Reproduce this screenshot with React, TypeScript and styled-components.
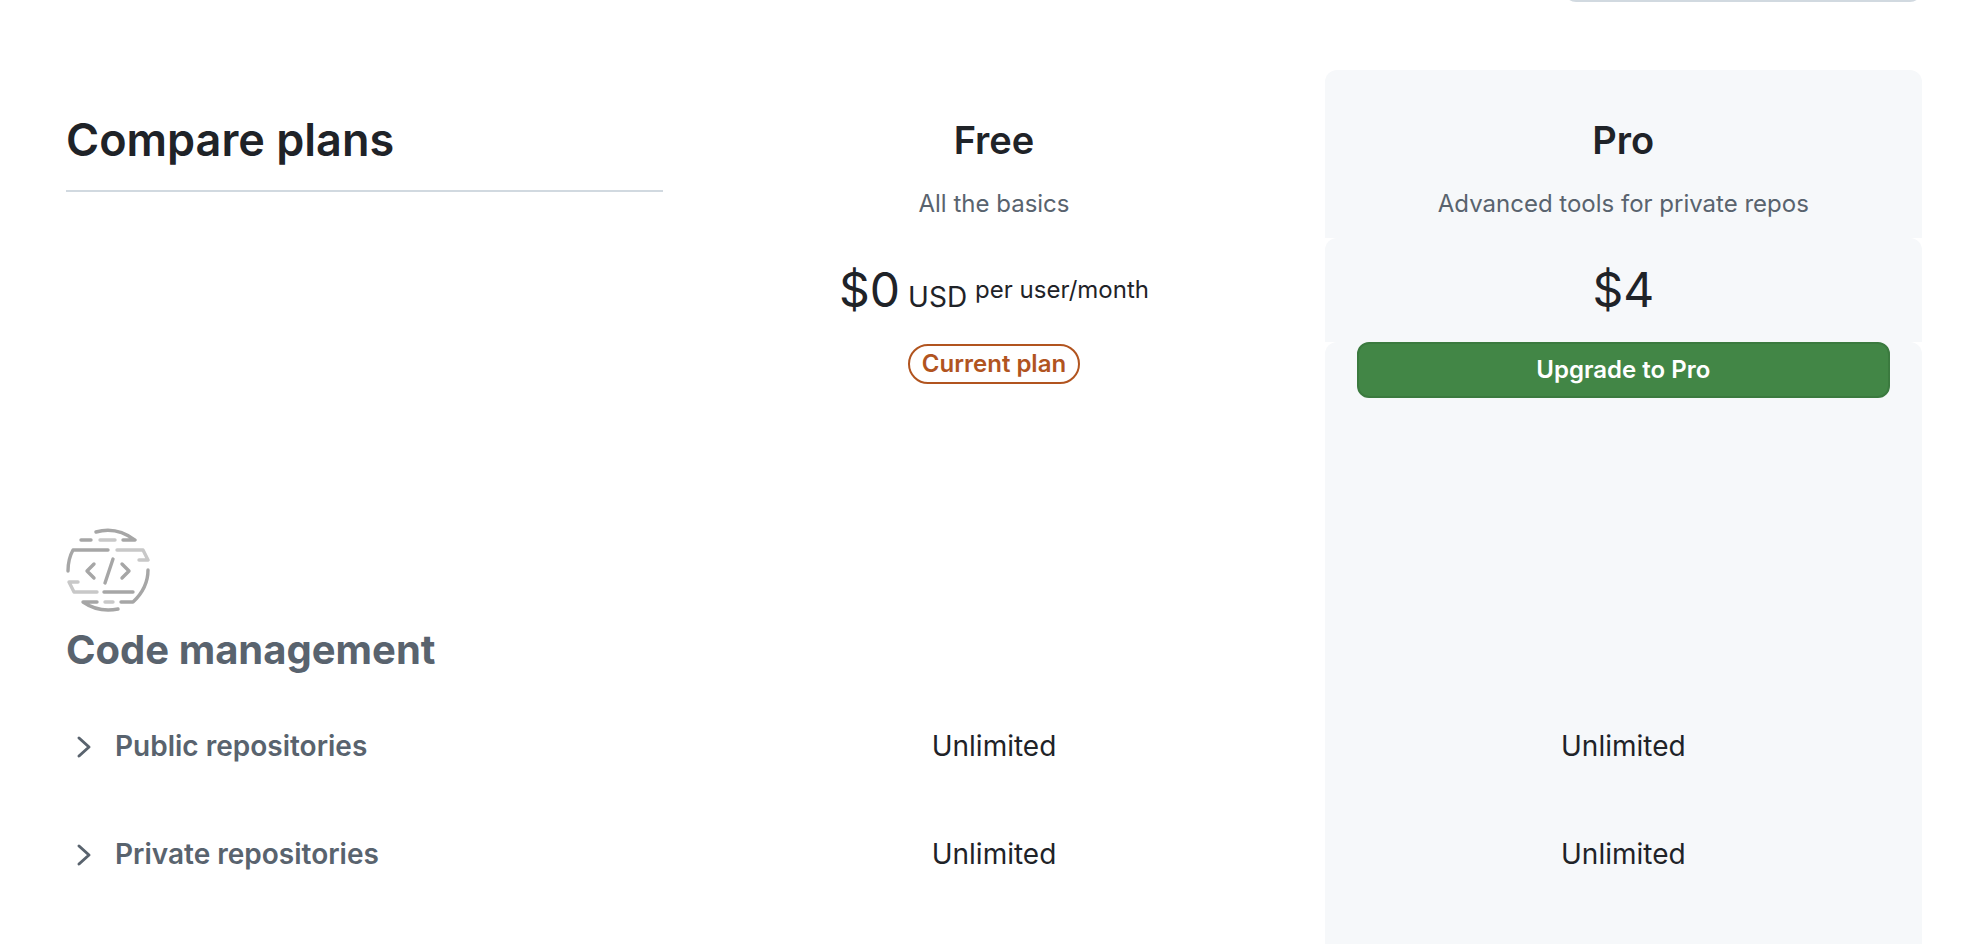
import React from "react";
import styled, { createGlobalStyle } from "styled-components";

const ink = "#1f2328";
const muted = "#59636e";
const line = "#d1d9e0";
const panel = "#f6f8fa";
const accent = "#b1541f";

const GlobalStyle = createGlobalStyle`
  *, *::before, *::after { box-sizing: border-box; }
  body {
    margin: 0;
    background: #fff;
    color: ${ink};
    font-family: Inter, "Liberation Sans", sans-serif;
    font-size: 28px;
    line-height: 44px;
  }
`;

const Page = styled.div`
  height: 100vh;
  overflow: hidden;
  padding: 0 64px 0 66px;
`;

const PlanCardEdge = styled.div`
  width: 358px;
  height: 2px;
  margin: 0 0 68px auto;
  overflow: hidden;
  display: flex;
  align-items: flex-end;

  &::after {
    content: "";
    flex: 1;
    height: 24px;
    border: 2px solid ${line};
    border-radius: 12px;
  }
`;

const Table = styled.table`
  display: block;
`;

const Body = styled.tbody`
  display: block;
`;

const Head = styled.thead`
  display: block;
`;

const Row = styled.tr<{ $height: number }>`
  display: grid;
  grid-template-columns: repeat(3, minmax(0, 1fr));
  column-gap: 32px;
  min-height: ${(p) => p.$height}px;
`;

const Cell = styled.td<{ $pro?: boolean; $rounded?: boolean; $pad?: string }>`
  padding: ${(p) => p.$pad ?? "0"};
  text-align: center;
  font-weight: 400;
  background: ${(p) => (p.$pro ? panel : "transparent")};
  border-radius: ${(p) => (p.$rounded ? "12px 12px 0 0" : "0")};
`;

const TitleCell = styled.td`
  padding: 40px 0 0;
  text-align: left;
`;

const Title = styled.h1`
  margin: 0;
  padding-bottom: 20px;
  border-bottom: 2px solid ${line};
  font-size: 45px;
  font-weight: 600;
  line-height: 60px;
`;

const PlanName = styled.h2`
  margin: 0 0 20px;
  font-size: 38px;
  font-weight: 600;
  line-height: 60px;
`;

const PlanNote = styled.p`
  margin: 0;
  color: ${muted};
  font-size: 24px;
  line-height: 28px;
`;

const Price = styled.div`
  display: flex;
  justify-content: center;
  align-items: baseline;
  gap: 8px;
  line-height: 64px;
`;

const Amount = styled.span`
  font-size: 48px;
`;

const Currency = styled.span`
  font-size: 28px;
`;

const Period = styled.span`
  align-self: center;
  padding-bottom: 8px;
  font-size: 24px;
  line-height: 28px;
`;

const CurrentPlan = styled.span`
  display: block;
  width: fit-content;
  margin: 0 auto;
  padding: 0 12px;
  border: 2px solid ${accent};
  border-radius: 20px;
  color: ${accent};
  font-size: 24px;
  font-weight: 600;
  line-height: 36px;
`;

const UpgradeButton = styled.button`
  display: block;
  width: 100%;
  padding: 0 24px;
  border: 2px solid #3b7a3f;
  border-radius: 12px;
  background: #428646;
  color: #fff;
  font: inherit;
  font-size: 24px;
  font-weight: 600;
  line-height: 52px;
  cursor: pointer;
`;

const CategoryCell = styled.th`
  padding: 0;
  text-align: left;
`;

const CategoryIcon = styled.svg`
  display: block;
  width: 84px;
  height: 84px;
`;

const CategoryName = styled.h3`
  margin: 12px 0 0;
  color: ${muted};
  font-size: 40px;
  font-weight: 700;
  line-height: 52px;
`;

const FeatureCell = styled.th`
  padding: 32px 0;
  text-align: left;
`;

const FeatureToggle = styled.button`
  display: flex;
  align-items: center;
  gap: 17px;
  padding: 0;
  border: 0;
  background: none;
  color: ${muted};
  font: inherit;
  font-weight: 600;
  cursor: pointer;
`;

const Chevron = styled.svg`
  width: 32px;
  height: 32px;
`;

function CodeIcon() {
  return (
    <CategoryIcon viewBox="0 0 84 84" fill="none" strokeWidth="3.4" strokeLinecap="round" strokeLinejoin="round" aria-hidden="true">
      <g stroke="#c8c8c8">
        <path d="M34 12H49M51 22H77L82 32H73M12 54H3L8 64H31M39 74H47" />
      </g>
      <g stroke="#a6a6a6">
        <path d="M30 4Q50 -2 69 12H57M15 12H25M42 22H7Q2 31 2 43" />
        <path d="M28 36L21 43L28 50M56 36L63 43L56 50M47 31L39 55" />
        <path d="M82 42Q82 60 67 74H55M38 64H67M31 74H17Q33 85 52 81" />
      </g>
    </CategoryIcon>
  );
}

const features = [
  { name: "Public repositories", free: "Unlimited", pro: "Unlimited" },
  { name: "Private repositories", free: "Unlimited", pro: "Unlimited" },
];

export default function App() {
  return (
    <>
      <GlobalStyle />
      <Page>
        <PlanCardEdge />
        <Table>
          <Head>
            <Row $height={168}>
              <TitleCell>
                <Title>Compare plans</Title>
              </TitleCell>
              <Cell as="th" scope="col" $pad="40px 32px 0">
                <PlanName>Free</PlanName>
                <PlanNote>All the basics</PlanNote>
              </Cell>
              <Cell as="th" scope="col" $pro $rounded $pad="40px 32px 0">
                <PlanName>Pro</PlanName>
                <PlanNote>Advanced tools for private repos</PlanNote>
              </Cell>
            </Row>
          </Head>
          <Body>
            <Row $height={104}>
              <Cell />
              <Cell $pad="20px 0 0">
                <Price>
                  <Amount>$0</Amount>
                  <Currency>USD</Currency>
                  <Period>per user/month</Period>
                </Price>
              </Cell>
              <Cell $pro $rounded $pad="20px 0 0">
                <Price>
                  <Amount>$4</Amount>
                </Price>
              </Cell>
            </Row>
            <Row $height={186}>
              <Cell />
              <Cell $pad="2px 32px">
                <CurrentPlan>Current plan</CurrentPlan>
              </Cell>
              <Cell $pro $rounded $pad="0 32px">
                <UpgradeButton type="button">Upgrade to Pro</UpgradeButton>
              </Cell>
            </Row>
            <Row $height={164}>
              <CategoryCell scope="rowgroup">
                <CodeIcon />
                <CategoryName>Code management</CategoryName>
              </CategoryCell>
              <Cell />
              <Cell $pro />
            </Row>
            {features.map((f) => (
              <Row key={f.name} $height={108}>
                <FeatureCell scope="row">
                  <FeatureToggle type="button" aria-expanded="false">
                    <Chevron viewBox="0 0 32 32" fill="none" stroke="currentColor" strokeWidth="3" strokeLinecap="round" strokeLinejoin="round" aria-hidden="true">
                      <path d="M13 8L23 17L13 26" />
                    </Chevron>
                    {f.name}
                  </FeatureToggle>
                </FeatureCell>
                <Cell $pad="32px 0">{f.free}</Cell>
                <Cell $pro $pad="32px 0">
                  {f.pro}
                </Cell>
              </Row>
            ))}
            <Row $height={108}>
              <Cell />
              <Cell />
              <Cell $pro />
            </Row>
          </Body>
        </Table>
      </Page>
    </>
  );
}
